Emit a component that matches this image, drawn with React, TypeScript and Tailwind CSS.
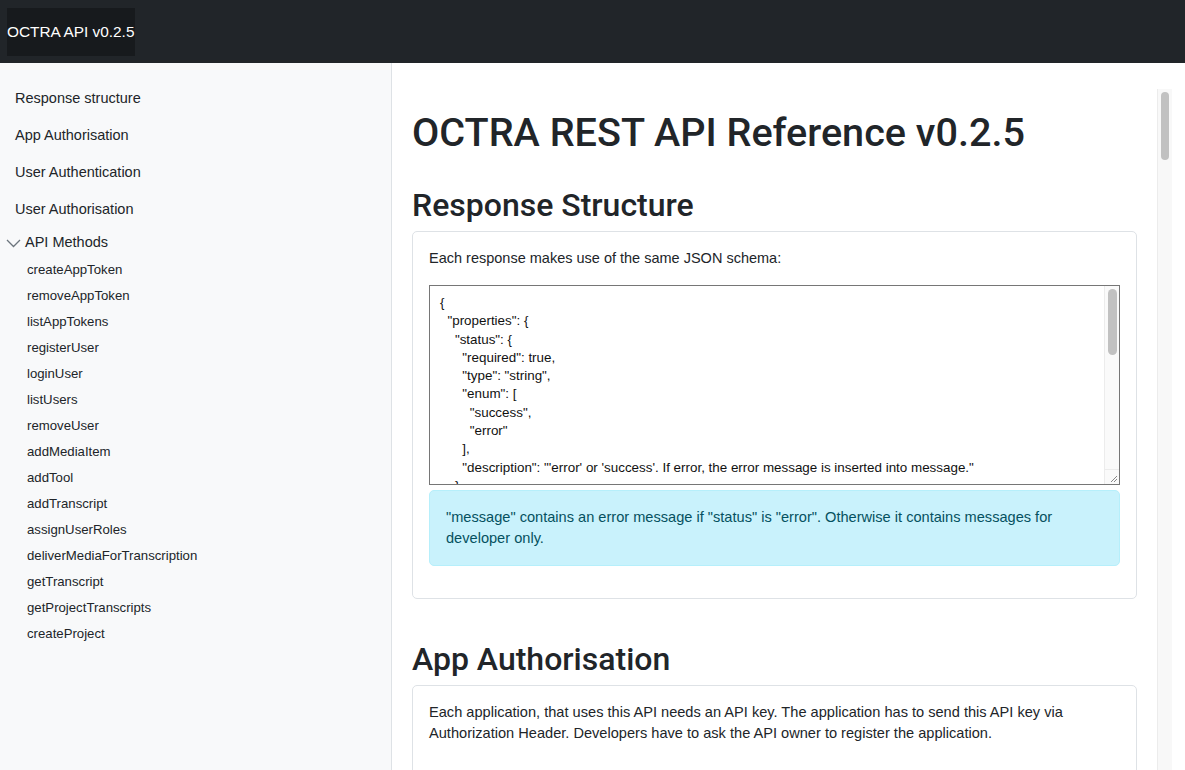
const TOP_LINKS = ["Response structure", "App Authorisation", "User Authentication", "User Authorisation"]

const METHODS = [
  "createAppToken",
  "removeAppToken",
  "listAppTokens",
  "registerUser",
  "loginUser",
  "listUsers",
  "removeUser",
  "addMediaItem",
  "addTool",
  "addTranscript",
  "assignUserRoles",
  "deliverMediaForTranscription",
  "getTranscript",
  "getProjectTranscripts",
  "createProject",
]

const SCHEMA = `{
  "properties": {
    "status": {
      "required": true,
      "type": "string",
      "enum": [
        "success",
        "error"
      ],
      "description": "'error' or 'success'. If error, the error message is inserted into message."
    },
    "message": {
      "required": true
    }
  }
}`

function Sidebar() {
  return (
    <aside className="w-[392px] shrink-0 border-r border-[#dee2e6] bg-[#f8f9fa] pt-[17px]">
      {TOP_LINKS.map((label) => (
        <div key={label} className="flex h-[37px] items-center px-[15px] text-[14.5px] text-[#212529]">
          {label}
        </div>
      ))}
      <div className="flex h-[29px] items-center pl-[6px] text-[14.5px] text-[#212529]">
        <svg width="15" height="9" viewBox="0 0 15 9" className="mr-[4px] mt-[1px]">
          <path d="M1 1l6.5 6.5L14 1" fill="none" stroke="#6c757d" strokeWidth="1.3" />
        </svg>
        API Methods
      </div>
      {METHODS.map((m) => (
        <div key={m} className="flex h-[26px] items-center pl-[27px] text-[13.2px] text-[#212529]">
          {m}
        </div>
      ))}
    </aside>
  )
}

function SchemaBox() {
  return (
    <div className="relative h-[200px] overflow-hidden border border-[#767676] bg-white">
      <pre className="pl-[10px] pr-[20px] pt-[8px] font-['Liberation_Sans',Arial,sans-serif] text-[13.4px] leading-[18.3px] text-[#111]">
        {SCHEMA}
      </pre>
      {/* fake textarea scrollbar */}
      <div className="absolute right-0 top-0 flex h-full w-[15px] flex-col border-l border-[#ececec] bg-[#fafafa]">
        <div className="flex-1 px-[3px] pt-[3px]">
          <div className="h-[66px] w-[9px] rounded-full bg-[#c1c1c1]" />
        </div>
        <div className="relative h-[15px] border-t border-[#ececec]">
          <svg width="10" height="10" viewBox="0 0 10 10" className="absolute bottom-[1px] right-[1px]">
            <path d="M9 3L3 9M9 6L6 9" stroke="#888" strokeWidth="1" />
          </svg>
        </div>
      </div>
    </div>
  )
}

export default function App() {
  return (
    <div className="flex h-[770px] w-[1185px] flex-col overflow-hidden bg-white font-['Liberation_Sans',Arial,sans-serif] text-[#212529]">
      {/* Header */}
      <header className="flex h-[63px] shrink-0 items-center bg-[#212529] px-[7px]">
        <div className="flex h-[48px] items-center whitespace-nowrap bg-[#171a1d] pr-[1px] text-[15.4px] text-white">
          OCTRA API v0.2.5
        </div>
      </header>

      <div className="flex min-h-0 flex-1">
        <Sidebar />

        {/* Main */}
        <main className="flex min-w-0 flex-1 pl-5 pr-[13px] pt-[26px]">
          <div className="min-w-0 flex-1 overflow-hidden pr-5 pt-5">
            <h1 className="mb-2 font-['Roboto',sans-serif] text-[39.6px] font-medium leading-[48px]">
              OCTRA REST API Reference v0.2.5
            </h1>

            <section className="mt-[29px]">
              <h2 className="mb-[7px] font-['Roboto',sans-serif] text-[32px] font-medium leading-[38px]">
                Response Structure
              </h2>
              <div className="rounded-[5px] border border-[#dee2e6] p-4">
                <p className="mb-4 text-[14.5px] leading-[21px]">Each response makes use of the same JSON schema:</p>
                <SchemaBox />
                <div className="mb-4 mt-[5px] rounded-[5px] border border-[#b6effb] bg-[#c9f2fc] px-4 py-4 text-[14.6px] leading-[21px] text-[#055160]">
                  "message" contains an error message if "status" is "error". Otherwise it contains messages for
                  developer only.
                </div>
              </div>
            </section>

            <section className="mt-[41px]">
              <h2 className="mb-[7px] font-['Roboto',sans-serif] text-[32px] font-medium leading-[38px]">
                App Authorisation
              </h2>
              <div className="h-[200px] rounded-[5px] border border-[#dee2e6] p-4">
                <p className="text-[14.6px] leading-[21px]">
                  Each application, that uses this API needs an API key. The application has to send this API key via
                  Authorization Header. Developers have to ask the API owner to register the application.
                </p>
              </div>
            </section>
          </div>

          {/* page scrollbar */}
          <div className="w-[15px] shrink-0 border-l border-[#ececec] bg-[#f8f8f8] px-[3px] pt-[3px]">
            <div className="h-[68px] w-[8px] rounded-full bg-[#c1c1c1]" />
          </div>
        </main>
      </div>
    </div>
  )
}
